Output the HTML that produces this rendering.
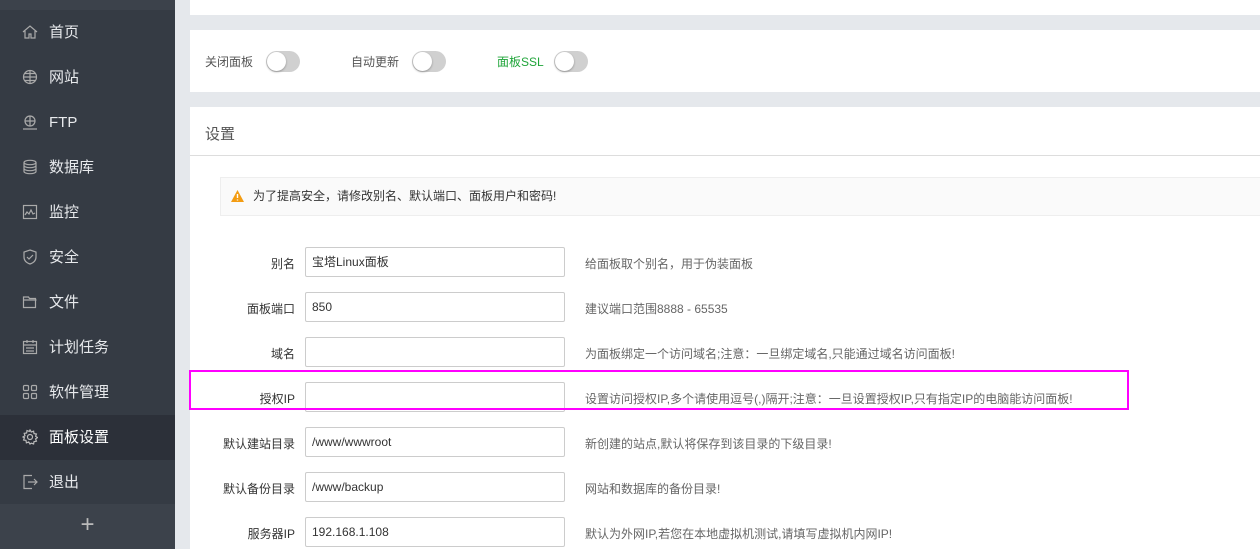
<!DOCTYPE html>
<html><head><meta charset="utf-8"><style>
*{margin:0;padding:0;box-sizing:border-box}
body{width:1260px;height:549px;overflow:hidden;background:#e5e8ec;font-family:"Liberation Sans","Noto Sans CJK SC",sans-serif;position:relative}
.side{position:absolute;left:0;top:0;width:175px;height:549px;background:#353b44}
.side .top{height:10px;background:#3c424b}
.item{position:absolute;left:0;width:175px;height:45px;color:#e8eaed;font-size:15px;line-height:45px;padding-left:49px}
.item.act{background:#2c3039;color:#fff}
.item svg{position:absolute;left:22px;top:14px}
.plus{position:absolute;left:0;top:504px;width:175px;height:45px;background:#3c424b;color:#bbb;font-size:24px;text-align:center;line-height:42px}
.card{position:absolute;left:190px;right:0;background:#fff}
.tg{display:inline-block;position:absolute;top:21px;width:34px;height:21px;border-radius:11px;background:#d0d0d0}
.tg:after{content:"";position:absolute;left:1px;top:1px;width:19px;height:19px;border-radius:50%;background:#fff;box-shadow:0 1px 2px rgba(0,0,0,.3)}
.tl{position:absolute;top:23px;font-size:12px;color:#555}
.lab{position:absolute;width:110px;left:185px;text-align:right;font-size:12px;color:#333}
.inp{position:absolute;left:305px;width:260px;height:30px;border:1px solid #ccc;border-radius:2px;font-size:12px;color:#333;padding-left:6px;line-height:28px}
.hint{position:absolute;left:585px;font-size:12px;color:#666}
</style></head><body>
<div class="side"><div class="top"></div>
<div class="item" style="top:10px"><svg width="16" height="16" viewBox="0 0 16 16" fill="none" stroke="#aaa" stroke-width="1.2"><path d="M1 8L8 2l7 6M3 7v7h4v-4h2v4h4V7"/></svg>首页</div>
<div class="item" style="top:55px"><svg width="16" height="16" viewBox="0 0 16 16" fill="none" stroke="#aaa" stroke-width="1.2"><circle cx="8" cy="8" r="6.5"/><path d="M1.5 8h13M8 1.5v13M3 4.5h10M3 11.5h10"/></svg>网站</div>
<div class="item" style="top:100px"><svg width="16" height="16" viewBox="0 0 16 16" fill="none" stroke="#aaa" stroke-width="1.2"><circle cx="8" cy="7" r="5"/><path d="M3 7h10M8 2v10M1 15h14"/></svg>FTP</div>
<div class="item" style="top:145px"><svg width="16" height="16" viewBox="0 0 16 16" fill="none" stroke="#aaa" stroke-width="1.2"><ellipse cx="8" cy="3.5" rx="6" ry="2.2"/><path d="M2 3.5v9c0 1.2 2.7 2.2 6 2.2s6-1 6-2.2v-9M2 6.5c0 1.2 2.7 2.2 6 2.2s6-1 6-2.2M2 9.5c0 1.2 2.7 2.2 6 2.2s6-1 6-2.2"/></svg>数据库</div>
<div class="item" style="top:190px"><svg width="16" height="16" viewBox="0 0 16 16" fill="none" stroke="#aaa" stroke-width="1.2"><rect x="1.5" y="1.5" width="13" height="13"/><path d="M3 11l2-3 2 2 2-4 2 4 2-1"/></svg>监控</div>
<div class="item" style="top:235px"><svg width="16" height="16" viewBox="0 0 16 16" fill="none" stroke="#aaa" stroke-width="1.2"><path d="M8 1l6 2v5c0 4-3 6-6 7-3-1-6-3-6-7V3z"/><path d="M5 8l2 2 4-4"/></svg>安全</div>
<div class="item" style="top:280px"><svg width="16" height="16" viewBox="0 0 16 16" fill="none" stroke="#aaa" stroke-width="1.2"><path d="M1.5 3h5l1 1.5h6v9h-12z M1.5 6h13"/></svg>文件</div>
<div class="item" style="top:325px"><svg width="16" height="16" viewBox="0 0 16 16" fill="none" stroke="#aaa" stroke-width="1.2"><rect x="1.5" y="2.5" width="13" height="12"/><path d="M1.5 6h13M5 1v3M11 1v3M4 9h8M4 12h8"/></svg>计划任务</div>
<div class="item" style="top:370px"><svg width="16" height="16" viewBox="0 0 16 16" fill="none" stroke="#aaa" stroke-width="1.2"><rect x="1.5" y="1.5" width="5" height="5" rx="1"/><rect x="9.5" y="1.5" width="5" height="5" rx="1"/><rect x="1.5" y="9.5" width="5" height="5" rx="1"/><rect x="9.5" y="9.5" width="5" height="5" rx="1"/></svg>软件管理</div>
<div class="item act" style="top:415px"><svg width="16" height="16" viewBox="0 0 16 16" fill="none" stroke="#bbb" stroke-width="1.2"><circle cx="8" cy="8" r="2.5"/><path d="M8 1l1.3 2 2.3-.8.4 2.4 2.4.4-.8 2.3 2 1.3-2 1.3.8 2.3-2.4.4-.4 2.4-2.3-.8L8 15l-1.3-2-2.3.8-.4-2.4-2.4-.4.8-2.3L1 8l2-1.3-.8-2.3 2.4-.4.4-2.4 2.3.8z"/></svg>面板设置</div>
<div class="item" style="top:460px"><svg width="16" height="16" viewBox="0 0 16 16" fill="none" stroke="#aaa" stroke-width="1.2"><path d="M10 1.5H2v13h8M6 8h9M12 5l3 3-3 3"/></svg>退出</div>
<div class="plus">+</div>
</div>
<div class="card" style="top:0;height:15px"></div>
<div class="card" style="top:30px;height:62px">
<span class="tl" style="left:15px">关闭面板</span><span class="tg" style="left:76px"></span>
<span class="tl" style="left:161px">自动更新</span><span class="tg" style="left:222px"></span>
<span class="tl" style="left:307px;color:#20a53a">面板SSL</span><span class="tg" style="left:364px"></span>
</div>
<div class="card" style="top:107px;bottom:0">
<div style="height:49px;border-bottom:1px solid #ddd;font-size:15px;color:#555;padding:16px 0 0 15px">设置</div>
<div style="position:absolute;left:30px;right:0;top:70px;height:39px;background:#fafafa;border:1px solid #eee;border-right:none;font-size:12px;color:#333;line-height:37px;padding-left:32px">
<svg style="position:absolute;left:10px;top:12px" width="13" height="12" viewBox="0 0 13 12"><path d="M6.5 0L13 12H0z" fill="#f39c12"/><path d="M6.5 4v4M6.5 9.5v1" stroke="#fff" stroke-width="1.4"/></svg>为了提高安全，请修改别名、默认端口、面板用户和密码!</div>
</div>
<div class="lab" style="top:255px">别名</div><div class="inp" style="top:247px">宝塔Linux面板</div><div class="hint" style="top:255px">给面板取个别名，用于伪装面板</div>
<div class="lab" style="top:300px">面板端口</div><div class="inp" style="top:292px">850</div><div class="hint" style="top:300px">建议端口范围8888 - 65535</div>
<div class="lab" style="top:345px">域名</div><div class="inp" style="top:337px"></div><div class="hint" style="top:345px">为面板绑定一个访问域名;注意：一旦绑定域名,只能通过域名访问面板!</div>
<div class="lab" style="top:390px">授权IP</div><div class="inp" style="top:382px"></div><div class="hint" style="top:390px">设置访问授权IP,多个请使用逗号(,)隔开;注意：一旦设置授权IP,只有指定IP的电脑能访问面板!</div>
<div class="lab" style="top:435px">默认建站目录</div><div class="inp" style="top:427px">/www/wwwroot</div><div class="hint" style="top:435px">新创建的站点,默认将保存到该目录的下级目录!</div>
<div class="lab" style="top:480px">默认备份目录</div><div class="inp" style="top:472px">/www/backup</div><div class="hint" style="top:480px">网站和数据库的备份目录!</div>
<div class="lab" style="top:525px">服务器IP</div><div class="inp" style="top:517px">192.168.1.108</div><div class="hint" style="top:525px">默认为外网IP,若您在本地虚拟机测试,请填写虚拟机内网IP!</div>
<div style="position:absolute;left:189px;top:370px;width:940px;height:40px;border:2px solid #f0f"></div>
</body></html>
